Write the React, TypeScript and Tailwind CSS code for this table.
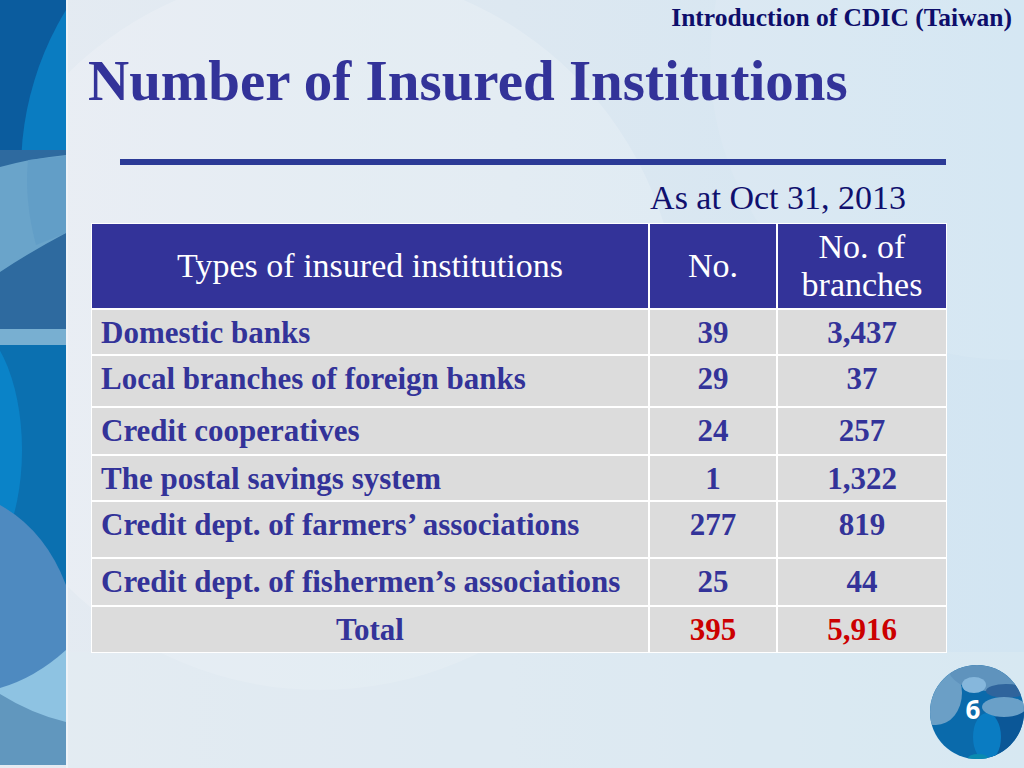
import React from "react";

const rows: { name: string; no: string; br: string; h: string }[] = [
  { name: "Domestic banks", no: "39", br: "3,437", h: "h-[44px]" },
  { name: "Local branches of foreign banks", no: "29", br: "37", h: "h-[50px]" },
  { name: "Credit cooperatives", no: "24", br: "257", h: "h-[46px]" },
  { name: "The postal savings system", no: "1", br: "1,322", h: "h-[44px]" },
  { name: "Credit dept. of farmers\u2019 associations", no: "277", br: "819", h: "h-[55px]" },
  { name: "Credit dept. of fishermen\u2019s associations", no: "25", br: "44", h: "h-[46px]" },
];

function LeftStrip() {
  return (
    <svg width="66" height="768" viewBox="0 0 66 768" className="block">
      <defs>
        <clipPath id="strip">
          <rect x="0" y="0" width="66" height="765" />
        </clipPath>
      </defs>
      <g clipPath="url(#strip)">
        <rect x="0" y="0" width="66" height="340" fill="#0b5c9e" />
        <circle cx="328" cy="170" r="307" fill="#0a7cc1" />
        <rect x="0" y="150" width="66" height="190" fill="#2e6a9f" />
        <path d="M0 167 Q33 158 66 155 L66 233 Q30 252 0 272 Z" fill="#6aa4ca" />
        <path d="M28 160 Q24 200 36 245 L66 233 L66 156 Z" fill="#5f9bc6" opacity="0.7" />
        <rect x="0" y="329" width="66" height="16" fill="#78afd1" />
        <rect x="0" y="345" width="66" height="423" fill="#0b70b0" />
        <ellipse cx="-40" cy="450" rx="62" ry="130" fill="#0a83c8" />
        <rect x="0" y="630" width="66" height="138" fill="#8ec3e2" />
        <path d="M0 694 Q32 714 66 722 L66 768 L0 768 Z" fill="#6197be" />
        <path d="M0 505 Q45 530 66 585 L66 650 Q35 678 0 688 Z" fill="#4e8ac0" />
      </g>
    </svg>
  );
}

function PageGlobe() {
  return (
    <div className="absolute left-[930px] top-[665px] w-[94px] h-[94px]">
      <svg width="94" height="94" viewBox="0 0 94 94" className="block">
        <defs>
          <clipPath id="globe">
            <circle cx="47" cy="47" r="47" />
          </clipPath>
        </defs>
        <g clipPath="url(#globe)">
          <rect width="94" height="94" fill="#0a6aab" />
          <ellipse cx="85" cy="75" rx="30" ry="30" fill="#0b5797" />
          <ellipse cx="57" cy="72" rx="14" ry="24" fill="#0a7cc2" />
          <ellipse cx="6" cy="28" rx="26" ry="32" fill="#6b9fc6" />
          <ellipse cx="58" cy="2" rx="40" ry="24" fill="#5f93bd" />
          <ellipse cx="44" cy="20" rx="12" ry="8" fill="#86b7dc" />
          <ellipse cx="76" cy="26" rx="20" ry="7" fill="#2f649c" />
          <ellipse cx="74" cy="42" rx="22" ry="10" fill="#6aa0c8" />
          <ellipse cx="48" cy="93" rx="10" ry="4" fill="#0a8ab0" />
        </g>
      </svg>
      <div className="absolute inset-0 flex items-center justify-center pr-[8px] pb-[6px] text-white font-bold text-[26px] leading-none font-['Open_Sans',sans-serif]">
        6
      </div>
    </div>
  );
}

export default function App() {
  return (
    <div className="relative w-[1024px] h-[768px] overflow-hidden flex font-['Liberation_Serif',serif] bg-gradient-to-r from-[#e5ebf2] via-[#dde8f1] to-[#d2e5f2]">
      <svg className="absolute inset-0 pointer-events-none" width="1024" height="768" viewBox="0 0 1024 768">
        <circle cx="320" cy="330" r="360" fill="#ffffff" opacity="0.18" />
        <circle cx="1010" cy="60" r="300" fill="#ffffff" opacity="0.08" />
        <rect x="68" y="652" width="956" height="116" fill="#e3eef3" opacity="0.35" />
      </svg>

      <div className="relative shrink-0">
        <LeftStrip />
      </div>
      <div className="relative w-[2px] shrink-0 bg-[#eef3f8]" />

      <div className="relative flex-1 flex flex-col">
        <div className="pt-[3px] pr-[12px] text-right text-[25.5px] leading-[29px] font-bold text-[#0e0e6b]">
          Introduction of CDIC (Taiwan)
        </div>
        <h1 className="mt-[17px] pl-[20px] text-[57px] leading-[64px] font-bold text-[#333399]">
          Number of Insured Institutions
        </h1>
        <div className="mt-[46px] ml-[52px] w-[826px] h-[6px] bg-[#2b3a96]" />

        <div className="ml-[23px] w-[856px] flex flex-col">
          <div className="mt-[14px] pr-[41px] text-right text-[34px] leading-[38px] text-[#10106e]">
            As at Oct 31, 2013
          </div>

          <div className="mt-[6px] bg-white p-[1px] grid grid-cols-[556px_126px_168px] gap-[2px]">
            <div className="h-[84px] bg-[#333399] text-white text-[34px] leading-[38px] flex items-center justify-center">
              Types of insured institutions
            </div>
            <div className="h-[84px] bg-[#333399] text-white text-[34px] leading-[38px] flex items-center justify-center">
              No.
            </div>
            <div className="h-[84px] bg-[#333399] text-white text-[34px] leading-[38px] flex flex-col items-center justify-center text-center">
              <span>No. of</span>
              <span>branches</span>
            </div>

            {rows.map((r) => (
              <React.Fragment key={r.name}>
                <div className={`${r.h} bg-[#dcdcdc] pl-[9px] pt-[4px] text-[31px] leading-[37px] font-bold text-[#333399] whitespace-nowrap`}>
                  {r.name}
                </div>
                <div className={`${r.h} bg-[#dcdcdc] pt-[4px] text-center text-[31px] leading-[37px] font-bold text-[#333399]`}>
                  {r.no}
                </div>
                <div className={`${r.h} bg-[#dcdcdc] pt-[4px] text-center text-[31px] leading-[37px] font-bold text-[#333399]`}>
                  {r.br}
                </div>
              </React.Fragment>
            ))}

            <div className="h-[45px] bg-[#dcdcdc] pt-[4px] text-center text-[31px] leading-[37px] font-bold text-[#333399]">
              Total
            </div>
            <div className="h-[45px] bg-[#dcdcdc] pt-[4px] text-center text-[31px] leading-[37px] font-bold text-[#cc0000]">
              395
            </div>
            <div className="h-[45px] bg-[#dcdcdc] pt-[4px] text-center text-[31px] leading-[37px] font-bold text-[#cc0000]">
              5,916
            </div>
          </div>
        </div>
      </div>

      <PageGlobe />
    </div>
  );
}
